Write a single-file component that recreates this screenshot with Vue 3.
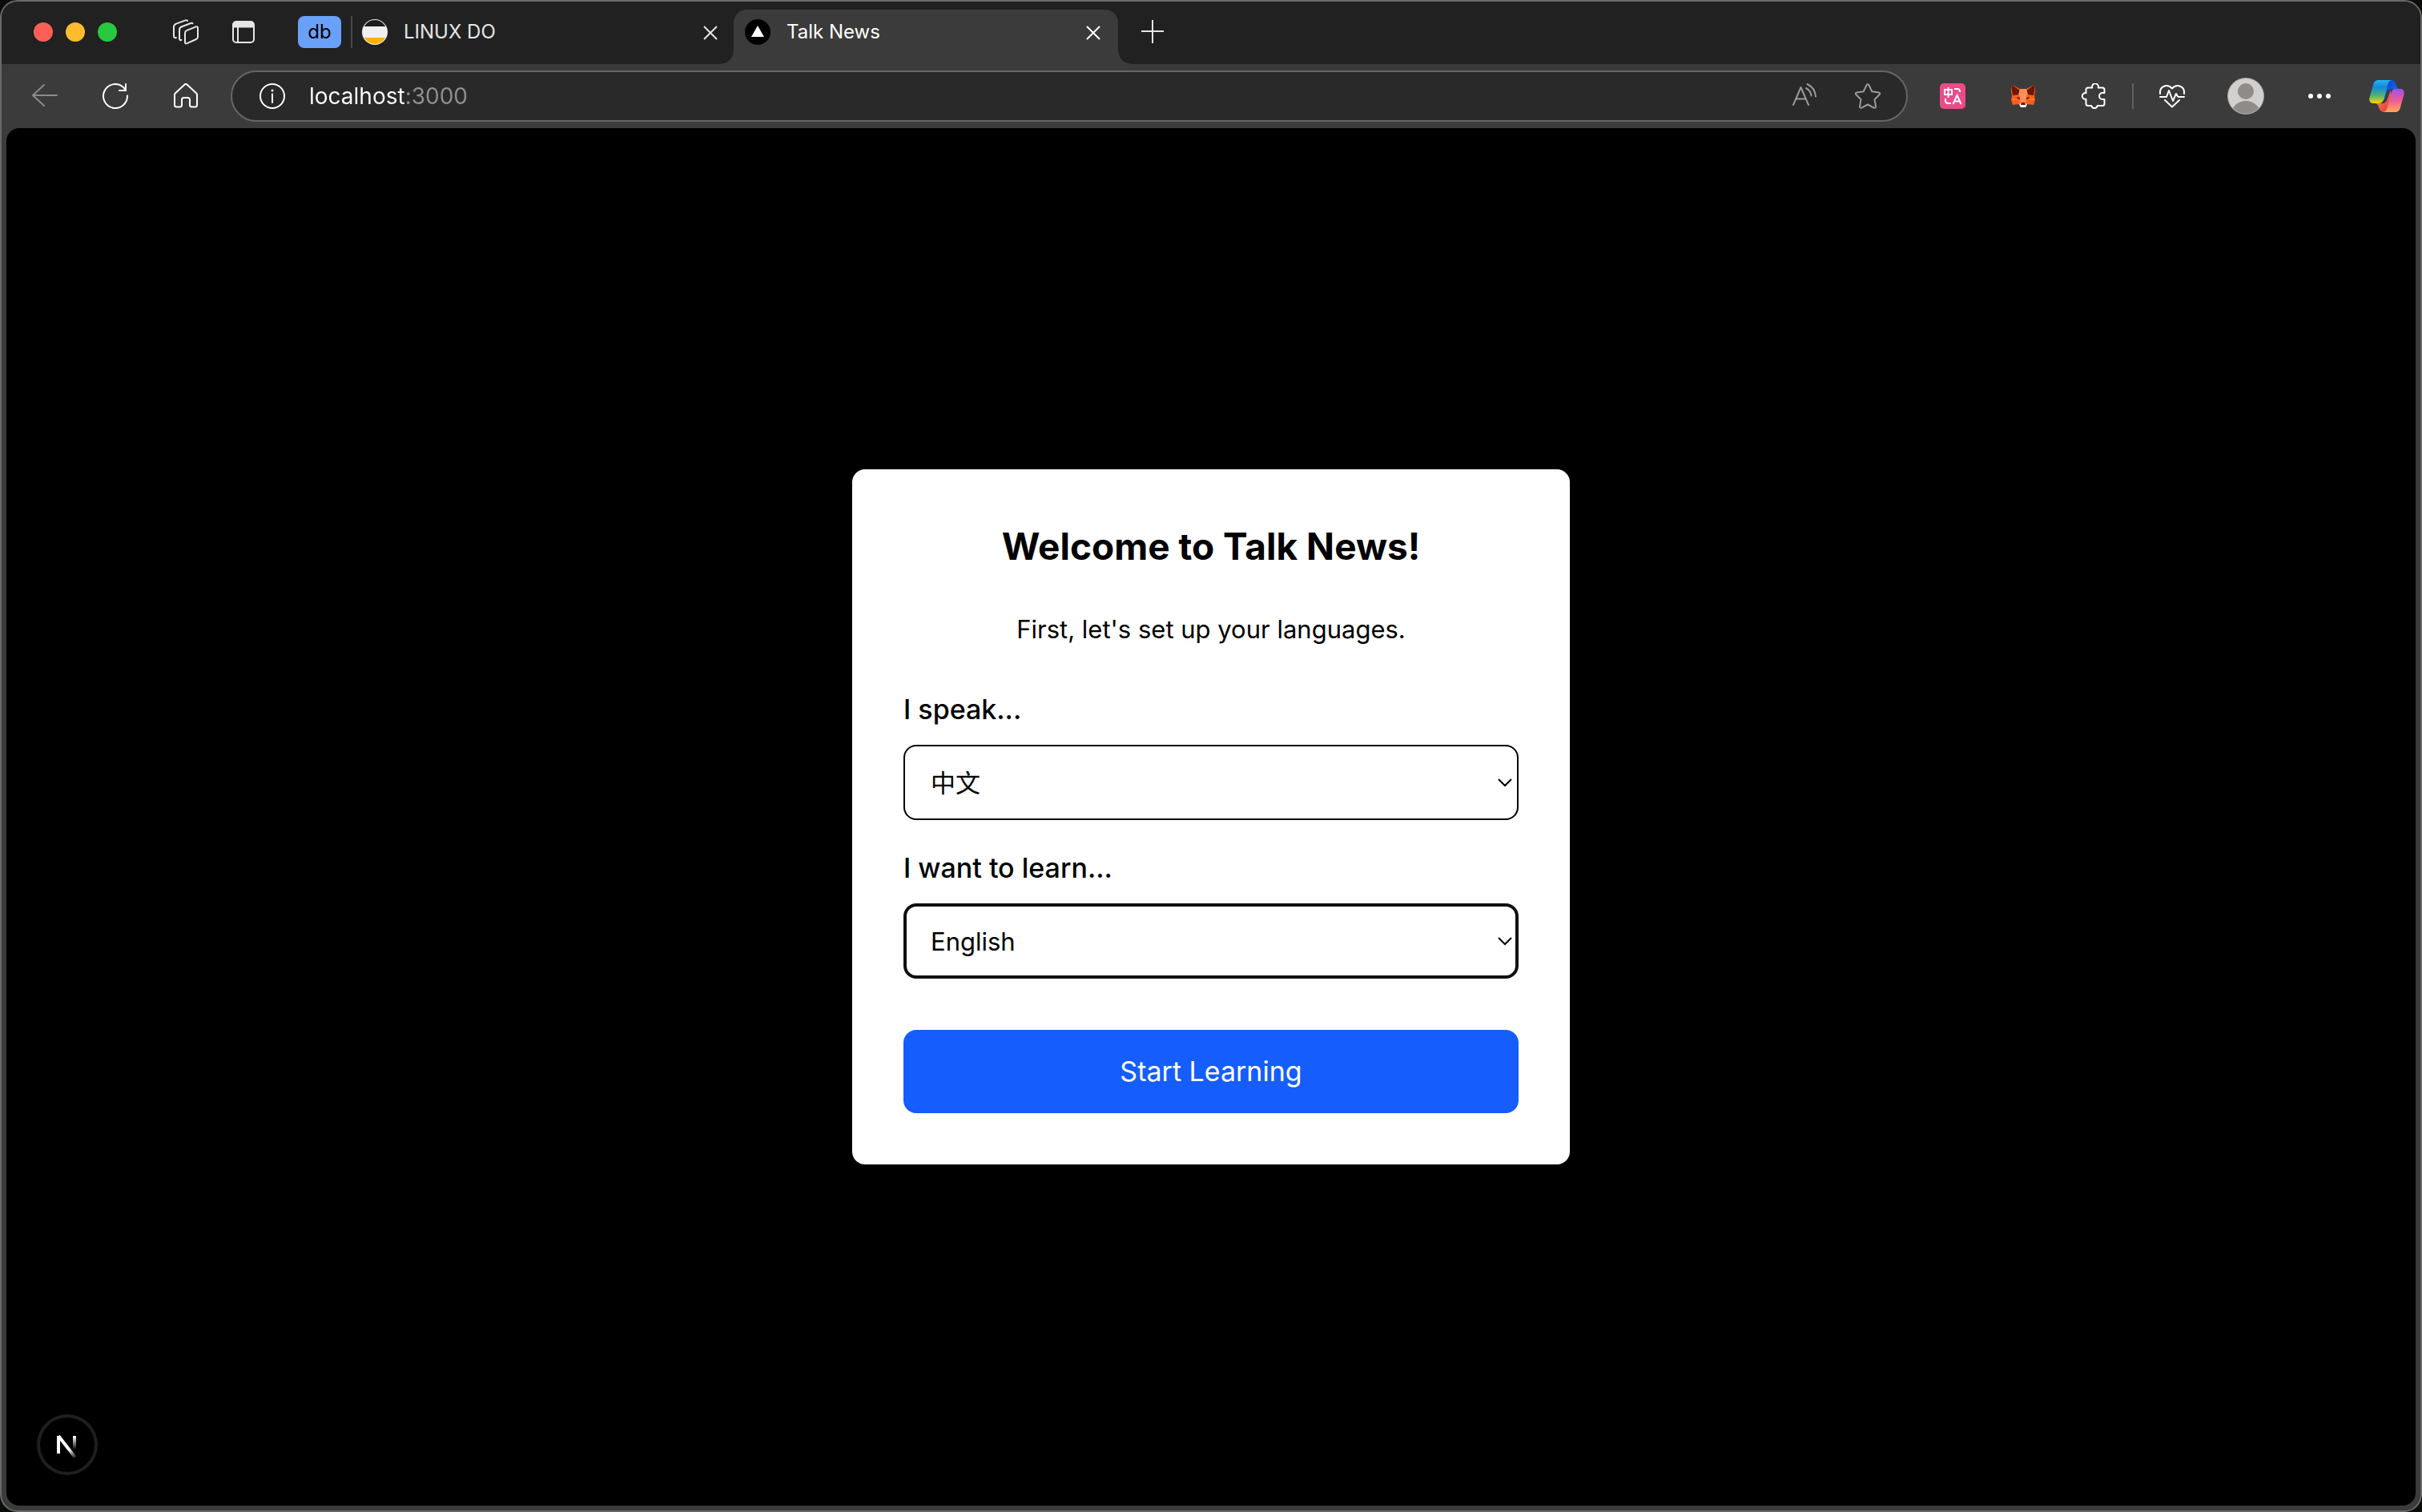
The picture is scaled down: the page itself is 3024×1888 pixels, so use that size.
<script setup>
import { ref } from 'vue'

const address = ref('localhost:3000')
const native = ref('zh')
const target = ref('en')

const languages = [
  { code: 'zh', name: '中文' },
  { code: 'en', name: 'English' },
]
</script>

<template>
  <div class="window">
    <header class="tab-strip">
      <div class="lights">
        <button class="light red" aria-label="Close window"></button>
        <button class="light yellow" aria-label="Minimize window"></button>
        <button class="light green" aria-label="Zoom window"></button>
      </div>
      <div class="strip-tools">
        <button class="icon-btn" aria-label="Workspaces">
          <svg viewBox="0 0 32 32" fill="none" stroke="#e6e6e6" stroke-width="2" stroke-linecap="round" stroke-linejoin="round">
            <path d="M17 14.2 28.6 9.4c1.400-.6 2.400 0 2.400 1.500v11c0 1.500-.7 2.500-2 3.100l-11.600 5.200c-1.500.7-2.400 0-2.400-1.500V17.200c0-1.500.7-2.400 2-3z" />
            <path d="M24.500 5.200c-.6-.6-1.400-.5-2.300-.2L11 9.300C8.900 10.100 8 11.300 8 13v11.500c0 1.300 1 2 2.500 1.400" />
            <path d="M18 2c-.5-.9-1.400-1-2.400-.6L4 5.600C2 6.400 1 7.500 1 9.500V21c0 1.600 1.200 2.600 3 2" />
          </svg>
        </button>
        <button class="icon-btn" aria-label="Tab actions">
          <svg viewBox="0 0 32 32" fill="none" stroke="#e6e6e6" stroke-width="2">
            <rect x="3" y="3" width="26" height="26" rx="4" />
            <path d="M3 10V7a4 4 0 0 1 4-4h18a4 4 0 0 1 4 4v3z" fill="#e6e6e6" stroke="none" />
            <path d="M3 9.500h26M9 10v19" />
          </svg>
        </button>
      </div>
      <button class="group">db</button>
      <span class="divider tall"></span>
      <nav class="tabs" aria-label="Tabs">
        <div class="tab">
          <svg class="favicon" viewBox="0 0 32 32">
            <defs><clipPath id="disc"><circle cx="16" cy="16" r="15" /></clipPath></defs>
            <circle cx="16" cy="16" r="16" fill="#f0f0f0" />
            <g clip-path="url(#disc)">
              <path fill="#1c1c1e" d="M0 0h32v9H0z" />
              <path fill="#ffb003" d="M0 23h32v9H0z" />
            </g>
          </svg>
          <span class="tab-title">LINUX DO</span>
          <button class="icon-btn" aria-label="Close tab">
            <svg viewBox="0 0 32 32" fill="none" stroke="#e6e6e6" stroke-width="2"><path d="m8 9 16 16M24 9 8 25" /></svg>
          </button>
        </div>
        <div class="tab active">
          <svg class="favicon" viewBox="0 0 32 32">
            <circle cx="16" cy="16" r="16" />
            <path fill="#fff" d="m16 8 8 14H8z" />
          </svg>
          <span class="tab-title">Talk News</span>
          <button class="icon-btn" aria-label="Close tab">
            <svg viewBox="0 0 32 32" fill="none" stroke="#fff" stroke-width="2"><path d="m8 9 16 16M24 9 8 25" /></svg>
          </button>
        </div>
      </nav>
      <button class="icon-btn new-tab" aria-label="New tab">
        <svg viewBox="0 0 32 32" fill="none" stroke="#e6e6e6" stroke-width="2"><path d="M2 15h28M16 1v29" /></svg>
      </button>
    </header>

    <div class="toolbar">
      <div class="nav-tools">
        <button class="icon-btn" aria-label="Back">
          <svg viewBox="0 0 32 32" fill="none" stroke="#8a8a8a" stroke-width="2" stroke-linecap="round"><path d="M31 15H1M15 2 1 15l14 13" /></svg>
        </button>
        <button class="icon-btn" aria-label="Reload">
          <svg viewBox="0 0 32 32" fill="none" stroke="#fff" stroke-width="2" stroke-linecap="round">
            <path d="M31 15.500A15 15 0 1 1 25.500 4.400L29 8.500M29 1v8h-8" />
          </svg>
        </button>
        <button class="icon-btn" aria-label="Home">
          <svg viewBox="0 0 32 32" fill="none" stroke="#fff" stroke-width="2" stroke-linejoin="round">
            <path d="M14.600 1.600a2 2 0 0 1 2.800 0L29 12.200c.7.600 1 1.300 1 2.200V27a2.500 2.500 0 0 1-2.500 2.500h-4A2.500 2.500 0 0 1 21 27v-6.500a2.500 2.500 0 0 0-2.500-2.500h-5a2.500 2.500 0 0 0-2.500 2.500V27a2.500 2.500 0 0 1-2.500 2.500h-4A2.500 2.500 0 0 1 2 27V14.400c0-.9.300-1.600 1-2.200z" />
          </svg>
        </button>
      </div>

      <div class="address">
        <button class="icon-btn" aria-label="Site information">
          <svg viewBox="0 0 32 32" fill="none" stroke="#fff" stroke-width="2">
            <circle cx="16" cy="16" r="15" />
            <path d="M16 13.500V24" stroke-linecap="round" />
            <circle cx="16" cy="9" r="1.500" fill="#fff" stroke="none" />
          </svg>
        </button>
        <input v-model="address" type="text" class="url" aria-label="Address" spellcheck="false" />
        <div class="address-tools">
          <button class="icon-btn" aria-label="Read aloud">
            <svg viewBox="0 0 32 32" fill="none" stroke="#9a9a9a" stroke-width="2" stroke-linecap="round" stroke-linejoin="round">
              <path d="M3 27 12.500 5 22 27M6.500 19.500h12M20.500 1c6 3 10 9 10.500 15.500M19 6c4 2.200 6 5.500 6.500 9.500" />
            </svg>
          </button>
          <button class="icon-btn" aria-label="Add to favorites">
            <svg viewBox="0 0 32 32" fill="none" stroke="#9a9a9a" stroke-width="2" stroke-linejoin="round">
              <path d="M14.600 2.200c.6-1.200 2.200-1.200 2.800 0l3.900 8 8.500 1.200c1.300.2 1.800 1.700.9 2.600l-6.200 6.200 1.500 8.800c.2 1.300-1.100 2.200-2.300 1.600L16 26.500l-7.700 4.100c-1.200.6-2.500-.3-2.300-1.600l1.500-8.800L1.300 14c-.9-.9-.4-2.400.9-2.600l8.500-1.200z" />
            </svg>
          </button>
        </div>
      </div>

      <div class="extensions">
        <button class="icon-btn" aria-label="Immersive translate">
          <svg viewBox="0 0 32 32" fill="none" stroke="#fff" stroke-width="2">
            <rect width="32" height="32" rx="5" fill="#ea4c89" stroke="none" />
            <path d="M6 8h9v6H6zM10.500 5v13M18 7h4c2 0 3 1.500 3 4M7 19v3c0 2 1.500 3 3.500 3H14" />
            <path d="m16.500 26 5-11 5 11M18.500 22.500h6" />
          </svg>
        </button>
        <button class="icon-btn" aria-label="Wallet">
          <svg viewBox="0 0 32 32">
            <path fill="#ff5c16" d="M2 2 12 7h8l10-5 1 8-1 5 1 6-2 6-8-1-2 4h-6l-2-4-8 1-2-6 1-6-1-5z" />
            <path fill="#661800" d="m2 2 10 7-1 5-8 1-1-6zM30 2 20 9l1 5 8 1 1-6z" />
            <path fill="#ff8d5d" d="M12 7h8l2 7 8 7h-8l-3 5h-6l-3-5H2l8-7z" />
            <path fill="#ff5c16" d="m11 13 2 13-3-5-6-1zM21 13l-2 13 3-5 6-1z" />
            <path fill="#661800" d="m8 17 4 1v2l-3-1zM24 17l-4 1v2l3-1z" />
            <path fill="#f2f2f2" d="m11 26 3-1h4l3 1-2 4h-6z" />
            <path fill="#661800" d="M14 24h4l1 3h-6z" />
          </svg>
        </button>
        <button class="icon-btn" aria-label="Extensions">
          <svg viewBox="0 0 32 32" fill="none" stroke="#fff" stroke-width="2" stroke-linejoin="round">
            <path d="M9 5.500h5.300a3.900 3.900 0 1 1 7.400 0H27A2.500 2.500 0 0 1 29.500 8v4H27a4 4 0 0 0 0 8h2.500v5.500A2.500 2.500 0 0 1 27 28h-6.200a3.900 3.900 0 0 1-7.600 0H9a2.500 2.500 0 0 1-2.500-2.500v-5.700a3.900 3.900 0 1 1 0-7.600V8A2.500 2.500 0 0 1 9 5.500z" />
          </svg>
        </button>
      </div>
      <span class="divider"></span>
      <div class="account">
        <button class="icon-btn" aria-label="Browser essentials">
          <svg viewBox="0 0 32 32" fill="none" stroke="#fff" stroke-width="2" stroke-linecap="round" stroke-linejoin="round">
            <path d="M1 13C0 3.500 10 0 16 6.500 22 0 32 3.500 31 13M1 17h8l3-8 5 13 4-9 2.500 4H31M7 21l9 8.500 9-8.500" />
          </svg>
        </button>
        <button class="icon-btn avatar" aria-label="Profile">
          <svg viewBox="0 0 48 48">
            <defs><clipPath id="face"><circle cx="24" cy="24" r="22" /></clipPath></defs>
            <circle cx="24" cy="24" r="23" fill="#aaa8a5" />
            <circle cx="24" cy="24" r="22" fill="#d2d0ce" />
            <g fill="#8f8b88" clip-path="url(#face)">
              <circle cx="24" cy="18" r="10" />
              <ellipse cx="24" cy="46" rx="18" ry="16" />
            </g>
          </svg>
        </button>
        <button class="icon-btn" aria-label="Settings and more">
          <svg viewBox="0 0 32 32" fill="#fff"><circle cx="5" cy="16" r="3" /><circle cx="16" cy="16" r="3" /><circle cx="27" cy="16" r="3" /></svg>
        </button>
      </div>
      <button class="icon-btn copilot" aria-label="Copilot">
        <svg viewBox="0 0 44 40">
          <defs>
            <linearGradient id="cool" x1="0" y1="0" x2="0" y2="1">
              <stop offset="0" stop-color="#23b4f5" /><stop offset=".3" stop-color="#1488dc" />
              <stop offset=".65" stop-color="#4bb17a" /><stop offset="1" stop-color="#ffd400" />
            </linearGradient>
            <linearGradient id="warm" x1="0" y1="0" x2="0" y2="1">
              <stop offset="0" stop-color="#9b51f0" /><stop offset=".5" stop-color="#f05a94" />
              <stop offset="1" stop-color="#ffac55" />
            </linearGradient>
            <linearGradient id="blue" x1="0" y1="0" x2="1" y2="1">
              <stop offset="0" stop-color="#0b3ccf" /><stop offset="1" stop-color="#1a80ee" />
            </linearGradient>
            <linearGradient id="ember" x1="0" y1="0" x2="1" y2="1">
              <stop offset="0" stop-color="#ff9c4a" /><stop offset="1" stop-color="#dd3040" />
            </linearGradient>
          </defs>
          <path fill="url(#blue)" d="M22 0h6c4 0 5 3 6 7 1 3 2 4 4 4h-9c-5 0-6 4-7 8l-3 9V6z" />
          <path fill="url(#ember)" d="M22 40h-4c-3 0-5-3-6-6s-2-5-5-5h10c3 0 5-3 6-6l4-11v18z" />
          <path fill="#3b3b3b" d="M27 12c-3 2-4 5-5 9s-2 6-4 8c-2 0 1-3 2-7l2-7c1-2 2-3 5-3z" />
          <path fill="url(#cool)" d="M12 0h17c-4 0-5 3-6 7l-4 15c-1 4-3 7-7 7H5c-4 0-6-3-4-9l4-14c1-4 3-6 7-6z" />
          <path fill="url(#warm)" d="M32 11h7c4 0 6 3 4 9l-4 14c-1 4-3 6-7 6H17c4 0 5-3 6-7l4-15c1-4 2-7 5-7z" />
        </svg>
      </button>
    </div>

    <main class="viewport">
      <form class="card" @submit.prevent>
        <h1>Welcome to Talk News!</h1>
        <p>First, let's set up your languages.</p>
        <div class="field">
          <label for="native">I speak...</label>
          <div class="select-wrap">
            <select id="native" v-model="native">
              <option v-for="l in languages" :key="l.code" :value="l.code">{{ l.name }}</option>
            </select>
            <svg class="chevron" viewBox="0 0 20 12" fill="none" stroke="#000" stroke-width="2"><path d="m2 1 8 8 8-8" /></svg>
          </div>
        </div>
        <div class="field">
          <label for="target">I want to learn...</label>
          <div class="select-wrap">
            <select id="target" v-model="target" class="focused">
              <option v-for="l in languages" :key="l.code" :value="l.code">{{ l.name }}</option>
            </select>
            <svg class="chevron" viewBox="0 0 20 12" fill="none" stroke="#000" stroke-width="2"><path d="m2 1 8 8 8-8" /></svg>
          </div>
        </div>
        <button type="submit" class="start">Start Learning</button>
      </form>
      <button type="button" class="dev-badge" aria-label="Open dev tools">
        <svg viewBox="0 0 76 76" fill="none" stroke-width="4">
          <defs>
            <linearGradient id="slash" gradientUnits="userSpaceOnUse" x1="40" y1="44" x2="49" y2="55">
              <stop stop-color="#fff" /><stop offset="1" stop-color="#fff" stop-opacity="0" />
            </linearGradient>
            <linearGradient id="stem" gradientUnits="userSpaceOnUse" x1="0" y1="28" x2="0" y2="44">
              <stop stop-color="#fff" /><stop offset="1" stop-color="#fff" stop-opacity="0" />
            </linearGradient>
          </defs>
          <path stroke="#fff" d="M27 49V27" />
          <path stroke="url(#slash)" d="m27 27 21 27" />
          <path stroke="url(#stem)" d="M47 27v17" />
        </svg>
      </button>
    </main>
  </div>
</template>

<style>
body {
  margin: 0;
  background: #0b0d0a;
}
</style>

<style scoped>
* {
  box-sizing: border-box;
}

.window {
  display: flex;
  flex-direction: column;
  min-height: 100vh;
  overflow: hidden;
  border: 2px solid #696969;
  border-radius: 22px;
  background: #3b3b3b;
  color: #000;
  font-family: Inter, "Noto Sans CJK SC", sans-serif;
}

button,
input,
select {
  margin: 0;
  padding: 0;
  border: 0;
  background: none;
  color: inherit;
  font: inherit;
}

svg {
  display: block;
  width: 100%;
  height: 100%;
}

.icon-btn {
  flex: none;
  width: 32px;
  height: 32px;
}

.divider {
  flex: none;
  width: 2px;
  height: 32px;
  background: #616161;
}

/* Tab strip */
.tab-strip {
  display: flex;
  align-items: center;
  height: 78px;
  padding: 0 40px 2px;
  background: #212121;
  font-size: 24px;
  line-height: 32px;
}

.lights {
  display: flex;
  gap: 16px;
}

.light {
  width: 24px;
  height: 24px;
  border-radius: 50%;
}

.red { background: #ff5f57; }
.yellow { background: #febc2e; }
.green { background: #28c840; }

.strip-tools {
  display: flex;
  gap: 40px;
  margin: 0 52px 0 70px;
}

.group {
  width: 54px;
  height: 40px;
  margin-right: 12px;
  border-radius: 8px;
  background: #69a1fa;
  color: #000;
}

.divider.tall {
  height: 40px;
  background: #484848;
}

.tabs {
  display: flex;
  align-self: flex-end;
  margin-bottom: -2px;
}

.tab {
  display: flex;
  align-items: center;
  gap: 20px;
  width: 476px;
  height: 68px;
  padding: 0 13px 12px 12px;
  color: #e6e6e6;
}

.favicon {
  flex: none;
  width: 32px;
  height: 32px;
}

.tab-title {
  flex: 1;
}

.tab.active {
  position: relative;
  width: 480px;
  padding: 0 15px 12px 14px;
  border-radius: 16px 16px 0 0;
  background: #3b3b3b;
  color: #fff;
}

.tab.active::before,
.tab.active::after {
  content: "";
  position: absolute;
  bottom: 0;
  width: 16px;
  height: 16px;
}

.tab.active::before {
  right: 100%;
  background: radial-gradient(circle at 0 0, transparent 15px, #3b3b3b 16px);
}

.tab.active::after {
  left: 100%;
  background: radial-gradient(circle at 100% 0, transparent 15px, #3b3b3b 16px);
}

.new-tab {
  margin-left: 27px;
}

/* Toolbar */
.toolbar {
  display: flex;
  align-items: center;
  height: 80px;
  padding: 0 20px 0 38px;
}

.nav-tools,
.extensions {
  display: flex;
  gap: 56px;
}

.address {
  display: flex;
  flex: 1;
  align-items: center;
  height: 64px;
  margin: 0 40px;
  padding: 0 32px 0 34px;
  border: 2px solid #666;
  border-radius: 32px;
  background: #292929;
}

.url {
  flex: 1;
  min-width: 0;
  height: 40px;
  margin-left: 30px;
  outline: none;
  background: linear-gradient(90deg, #fff 122px, #8f8f8f 122px);
  background-clip: text;
  -webkit-text-fill-color: transparent;
  font-size: 28px;
}

.address-tools {
  display: flex;
  gap: 48px;
}

.toolbar > .divider {
  margin: 0 32px;
}

.account {
  display: flex;
  align-items: center;
  gap: 52px;
  margin-right: 46px;
}

.avatar {
  width: 48px;
  height: 48px;
}

.copilot {
  width: 44px;
  height: 40px;
}

/* Page */
.viewport {
  position: relative;
  display: flex;
  flex: 1;
  align-items: center;
  justify-content: center;
  margin: 0 6px 6px;
  border-radius: 16px;
  background: #000;
}

.card {
  width: 100%;
  max-width: 896px;
  padding: 64px;
  border-radius: 16px;
  background: #fff;
}

h1 {
  margin: 0 0 48px;
  font-size: 46px;
  font-weight: 700;
  line-height: 64px;
  text-align: center;
}

p {
  margin: 0 0 48px;
  font-size: 31px;
  line-height: 48px;
  text-align: center;
}

.field {
  margin-bottom: 32px;
}

label {
  display: block;
  margin-bottom: 16px;
  font-size: 34px;
  font-weight: 500;
  line-height: 56px;
}

.select-wrap {
  position: relative;
}

select {
  display: block;
  width: 100%;
  height: 94px;
  padding: 0 32px;
  border: 2px solid #000;
  border-radius: 16px;
  appearance: none;
  background: #fff;
  font-size: 31px;
}

select.focused {
  padding: 0 30px;
  border: 4px solid #101010;
}

.chevron {
  position: absolute;
  top: 42px;
  right: 7px;
  width: 20px;
  height: 12px;
  pointer-events: none;
}

.start {
  width: 100%;
  height: 104px;
  margin-top: 32px;
  border-radius: 16px;
  background: #155dfc;
  color: #fff;
  font-size: 34px;
  line-height: 56px;
}

.dev-badge {
  position: absolute;
  bottom: 38px;
  left: 38px;
  width: 76px;
  height: 76px;
  border-radius: 50%;
  background: #000;
  box-shadow: inset 0 0 0 4px #1f1f1f;
}
</style>
